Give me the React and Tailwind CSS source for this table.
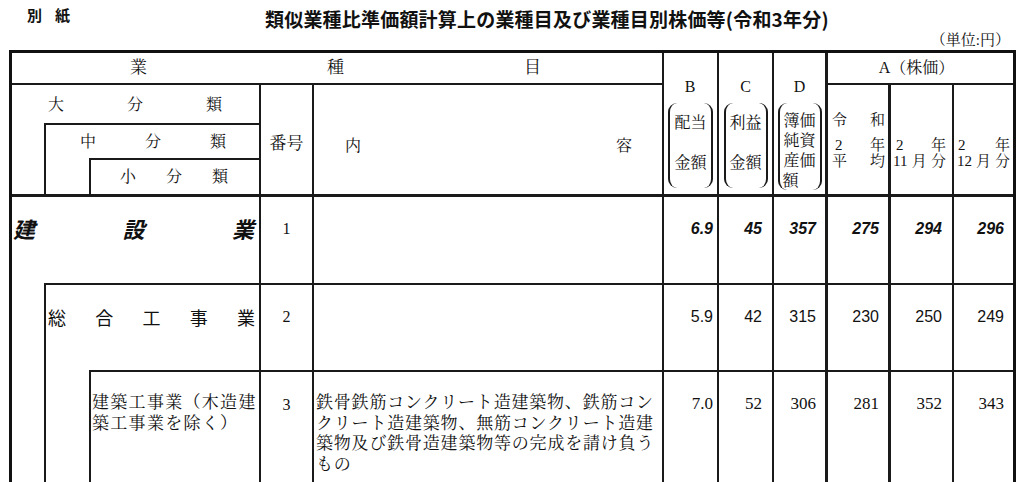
import React from 'react'

const serif = "font-['Liberation_Serif','Noto_Serif_CJK_JP','Noto_Sans_CJK_JP',serif]"
const gothic = "font-['Noto_Sans_CJK_JP',sans-serif]"
const line = "border-[#1a1a1a]"

const valueCols = [
  { col: "col-start-6 col-end-7 border-l-2", pad: "pr-[4px]" },
  { col: "col-start-7 col-end-8 border-l-2", pad: "pr-[10px]" },
  { col: "col-start-8 col-end-9 border-l-2", pad: "pr-[9px]" },
  { col: "col-start-9 col-end-10 border-l-[3px]", pad: "pr-[9px]" },
  { col: "col-start-10 col-end-11 border-l-[3px]", pad: "pr-[10px]" },
  { col: "col-start-11 col-end-12 border-l-2", pad: "pr-[9px]" },
]

const rows = [
  {
    row: "row-start-5 row-end-6 border-t-[3px] pt-[20px]",
    no: "1",
    vals: ["6.9", "45", "357", "275", "294", "296"],
    font: "font-['Liberation_Sans',sans-serif] font-bold italic text-[16px] leading-[24px]",
  },
  {
    row: "row-start-6 row-end-7 border-t-2 pt-[20px]",
    no: "2",
    vals: ["5.9", "42", "315", "230", "250", "249"],
    font: "font-['Liberation_Sans',sans-serif] text-[16px] leading-[24px]",
  },
  {
    row: "row-start-7 row-end-8 border-t-2 pt-[21px]",
    no: "3",
    vals: ["7.0", "52", "306", "281", "352", "343"],
    font: serif + " text-[17px] leading-[21px]",
  },
]

function Spread({ chars, className }) {
  return (
    <div className={`flex justify-between ${className}`}>
      {chars.map((c, i) => (
        <span key={i}>{c}</span>
      ))}
    </div>
  )
}

function Bracket({ className, children }) {
  return (
    <div className={`border-x-2 ${line} rounded-[9px] flex flex-col items-center ${className}`}>
      {children}
    </div>
  )
}

export default function App() {
  return (
    <div className={`h-[482px] w-[1024px] overflow-hidden bg-white text-[#111] ${serif}`}>
      {/* heading */}
      <div className="flex h-[30px] items-start">
        <div className={`w-[265px] pl-[27px] pt-[5px] flex gap-[13px] text-[15px] leading-[20px] font-bold ${gothic}`}>
          <span>別</span>
          <span>紙</span>
        </div>
        <div className={`pt-[7px] text-[19px] leading-[24px] font-bold tracking-[0.2px] ${gothic}`}>
          類似業種比準価額計算上の業種目及び業種目別株価等(令和3年分)
        </div>
      </div>
      <div className="flex h-[20px] justify-end pr-[14px] text-[15px] leading-[20px]">（単位:円）</div>

      {/* table */}
      <div className="ml-[9px] w-[1007px] border-[3px] border-b-0 border-[#111] grid grid-cols-[32px_45px_170px_53px_350px_55px_55px_53px_63px_64px_61px] grid-rows-[30px_40px_35px_36px_89px_87px_140px]">
        {/* header */}
        <Spread
          chars={["業", "種", "目"]}
          className="col-start-1 col-end-6 row-start-1 row-end-2 items-center pl-[118px] pr-[121px] text-[17px]"
        />

        <div className={`col-start-6 col-end-7 row-start-1 row-end-5 border-l-2 ${line} flex flex-col items-center pt-[24px] text-[16px] leading-[20px]`}>
          <span className="pr-[1px]">B</span>
          <Bracket className="mt-[6px] h-[85px] w-[45px] pt-[10px] gap-[20px]">
            <span>配当</span>
            <span>金額</span>
          </Bracket>
        </div>
        <div className={`col-start-7 col-end-8 row-start-1 row-end-5 border-l-2 ${line} flex flex-col items-center pt-[24px] text-[16px] leading-[20px]`}>
          <span>C</span>
          <Bracket className="mt-[6px] h-[85px] w-[44px] pt-[10px] gap-[20px]">
            <span>利益</span>
            <span>金額</span>
          </Bracket>
        </div>
        <div className={`col-start-8 col-end-9 row-start-1 row-end-5 border-l-2 ${line} flex flex-col items-center pt-[24px] text-[16px] leading-[20px]`}>
          <span>D</span>
          <Bracket className="mt-[6px] h-[87px] w-[44px] pt-[8px]">
            <span>簿価</span>
            <span>純資</span>
            <span>産価</span>
            <span className="self-start pl-[3px]">額</span>
          </Bracket>
        </div>

        <div className={`col-start-9 col-end-12 row-start-1 row-end-2 border-l-[3px] ${line} flex items-center justify-center pr-[8px] text-[16px]`}>
          A（株価）
        </div>

        <Spread
          chars={["大", "分", "類"]}
          className={`col-start-1 col-end-4 row-start-2 row-end-3 border-t-2 ${line} items-center pl-[36px] pr-[37px] pt-[2px] text-[16px]`}
        />
        <div className={`col-start-4 col-end-5 row-start-2 row-end-5 border-t-2 border-l-2 ${line} flex items-center justify-center pt-[8px] text-[17px]`}>
          番号
        </div>
        <Spread
          chars={["内", "容"]}
          className={`col-start-5 col-end-6 row-start-2 row-end-5 border-t-2 border-l-2 ${line} items-center pl-[31px] pr-[30px] pt-[12px] text-[16px]`}
        />

        <Spread
          chars={["中", "分", "類"]}
          className={`col-start-2 col-end-4 row-start-3 row-end-4 border-t-2 border-l-2 ${line} items-center pl-[34px] pr-[33px] text-[16px]`}
        />
        <div className={`col-start-2 col-end-3 row-start-4 row-end-5 border-l-2 ${line}`} />
        <Spread
          chars={["小", "分", "類"]}
          className={`col-start-3 col-end-4 row-start-4 row-end-5 border-t-2 border-l-2 ${line} items-center pl-[29px] pr-[31px] text-[16px]`}
        />

        <div className={`col-start-9 col-end-10 row-start-2 row-end-5 border-t-2 border-l-[3px] ${line} pl-[4px] pr-[3px] pt-[27px] text-[15px] leading-[16px]`}>
          <Spread chars={["令", "和"]} />
          <Spread chars={["2", "年"]} className="mt-[9px] pl-[3px]" />
          <Spread chars={["平", "均"]} />
        </div>
        <div className={`col-start-10 col-end-11 row-start-2 row-end-5 border-t-2 border-l-[3px] ${line} pl-[2px] pr-[6px] pt-[52px] text-[15px] leading-[16px]`}>
          <Spread chars={["2", "年"]} className="pl-[3px]" />
          <Spread chars={["11", "月", "分"]} />
        </div>
        <div className={`col-start-11 col-end-12 row-start-2 row-end-5 border-t-2 border-l-2 ${line} pl-[3px] pr-[3px] pt-[52px] text-[15px] leading-[16px]`}>
          <Spread chars={["2", "年"]} className="pl-[1px]" />
          <Spread chars={["12", "月", "分"]} />
        </div>

        {/* body */}
        <Spread
          chars={["建", "設", "業"]}
          className={`col-start-1 col-end-4 row-start-5 row-end-6 border-t-[3px] ${line} pl-[1px] pr-[5px] pt-[17px] text-[22px] leading-[28px] font-bold italic ${gothic}`}
        />
        <Spread
          chars={["総", "合", "工", "事", "業"]}
          className={`col-start-2 col-end-4 row-start-6 row-end-7 border-t-2 border-l-2 ${line} pl-[2px] pr-[4px] pt-[20px] text-[18px] leading-[24px] ${gothic}`}
        />
        <div className={`col-start-2 col-end-3 row-start-7 row-end-8 border-l-2 ${line}`} />
        <div className={`col-start-3 col-end-4 row-start-7 row-end-8 border-t-2 border-l-2 ${line} pl-[1px] pt-[21px] text-[17px] leading-[20.5px] tracking-[1.3px] whitespace-nowrap`}>
          建築工事業（木造建
          <br />
          築工事業を除く）
        </div>

        {rows.map((r, i) => (
          <React.Fragment key={i}>
            <div className={`col-start-4 col-end-5 ${r.row} border-l-2 ${line} text-center text-[16px] leading-[24px]`}>
              {r.no}
            </div>
            <div className={`col-start-5 col-end-6 ${r.row} border-l-2 ${line} pl-[2px] text-[17px] leading-[20.7px] tracking-[0.8px] whitespace-nowrap`}>
              {i === 2 && (
                <>
                  鉄骨鉄筋コンクリート造建築物、鉄筋コン
                  <br />
                  クリート造建築物、無筋コンクリート造建
                  <br />
                  築物及び鉄骨造建築物等の完成を請け負う
                  <br />
                  もの
                </>
              )}
            </div>
            {r.vals.map((v, j) => (
              <div key={j} className={`${valueCols[j].col} ${r.row} ${line} ${valueCols[j].pad} text-right ${r.font}`}>
                {v}
              </div>
            ))}
          </React.Fragment>
        ))}
      </div>
    </div>
  )
}
